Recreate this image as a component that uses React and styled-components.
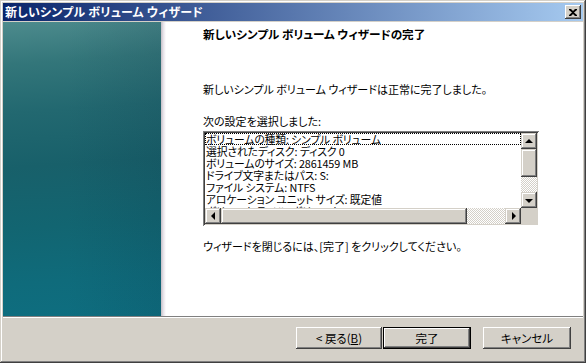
import React from "react";
import styled, { createGlobalStyle } from "styled-components";

const Global = createGlobalStyle`
  html, body { margin: 0; padding: 0; background: #d4d0c8; }
  body { width: 586px; height: 363px; overflow: hidden; }
  * { box-sizing: border-box; }
`;

const FONT = `"Noto Sans CJK JP", "Noto Sans", sans-serif`;

const Window = styled.div`
  width: 586px;
  height: 363px;
  display: flex;
  flex-direction: column;
  background: #d4d0c8;
  padding: 3px;
  box-shadow: inset -1px -1px #404040, inset 1px 1px #d4d0c8,
    inset -2px -2px #808080, inset 2px 2px #ffffff;
  font-family: ${FONT};
  font-size: 11px;
  font-feature-settings: "palt";
  color: #000;
`;

const TitleBar = styled.div`
  height: 18px;
  flex: none;
  display: flex;
  align-items: center;
  justify-content: space-between;
  padding: 0 2px 0 2px;
  background: linear-gradient(to right, #0a246a, #a6caf0);
  color: #fff;
  font-weight: bold;
  font-size: 12px;
  margin-bottom: 1px;
`;

const TitleText = styled.span`
  line-height: 18px;
  letter-spacing: 0.2px;
  white-space: nowrap;
`;

const CloseBox = styled.div`
  width: 16px;
  height: 14px;
  background: #d4d0c8;
  box-shadow: inset -1px -1px #404040, inset 1px 1px #ffffff,
    inset -2px -2px #808080, inset 2px 2px #d4d0c8;
  display: flex;
  align-items: center;
  justify-content: center;
`;

const Body = styled.div`
  height: 294px;
  flex: none;
  display: flex;
  background: #fff;
`;

const Banner = styled.div`
  width: 158px;
  flex: none;
  background:
    linear-gradient(to right, rgba(10, 40, 60, 0) 40%, rgba(10, 40, 60, 0.12) 100%),
    linear-gradient(176deg, #4d8b8d 0%, #33767a 14%, #226870 30%, #18606a 48%, #126571 68%, #0f6b7b 86%, #0e6e80 100%);
`;

const BannerShadow = styled.div`
  width: 5px;
  flex: none;
  background: linear-gradient(to right, #c4bfc6, #e8e4ea 50%, #ffffff);
`;

const Content = styled.div`
  flex: 1;
  display: flex;
  flex-direction: column;
  padding-left: 37px;
`;

const Heading = styled.div`
  font-weight: bold;
  font-size: 11.6px;
  line-height: 14px;
  margin-top: 5px;
  white-space: nowrap;
`;

const Para = styled.div`
  line-height: 14px;
  margin-top: ${(p) => p.$mt}px;
  white-space: nowrap;
`;

const ListBox = styled.div`
  width: 336px;
  height: 95px;
  margin-top: 3px;
  padding: 2px;
  background: #fff;
  box-shadow: inset 1px 1px #808080, inset -1px -1px #ffffff,
    inset 2px 2px #404040, inset -2px -2px #d4d0c8;
  display: grid;
  grid-template-columns: 316px 16px;
  grid-template-rows: 75px 16px;
`;

const Items = styled.div`
  overflow: hidden;
  display: flex;
  flex-direction: column;
`;

const Item = styled.div`
  height: 12px;
  flex: none;
  line-height: 12px;
  padding-left: 1px;
  font-size: 10.8px;
  letter-spacing: -0.1px;
  white-space: nowrap;
  outline: ${(p) => (p.$focus ? "1px dotted #000" : "none")};
  outline-offset: -1px;
`;

const VScroll = styled.div`
  display: flex;
  flex-direction: column;
`;

const HScroll = styled.div`
  display: flex;
`;

const Corner = styled.div`
  background: #d4d0c8;
`;

const ScrollBtn = styled.div`
  width: 16px;
  height: 16px;
  flex: none;
  background: #d4d0c8;
  box-shadow: inset -1px -1px #404040, inset 1px 1px #d4d0c8,
    inset -2px -2px #808080, inset 2px 2px #ffffff;
  display: flex;
  align-items: center;
  justify-content: center;
`;

const Thumb = styled.div`
  flex: none;
  width: ${(p) => (p.$h ? `${p.$len}px` : "16px")};
  height: ${(p) => (p.$h ? "16px" : `${p.$len}px`)};
  background: #d4d0c8;
  box-shadow: inset -1px -1px #404040, inset 1px 1px #d4d0c8,
    inset -2px -2px #808080, inset 2px 2px #ffffff;
`;

const Track = styled.div`
  flex: 1;
  background: repeating-conic-gradient(#d4d0c8 0 25%, #ffffff 0 50%) 0 0 / 2px 2px;
`;

const Tri = styled.div`
  width: 0;
  height: 0;
  ${(p) =>
    p.$dir === "up"
      ? "border-left: 4px solid transparent; border-right: 4px solid transparent; border-bottom: 4px solid #000; margin-top: -1px;"
      : p.$dir === "down"
      ? "border-left: 4px solid transparent; border-right: 4px solid transparent; border-top: 4px solid #000; margin-top: 1px;"
      : p.$dir === "left"
      ? "border-top: 4px solid transparent; border-bottom: 4px solid transparent; border-right: 4px solid #000; margin-left: -1px;"
      : "border-top: 4px solid transparent; border-bottom: 4px solid transparent; border-left: 4px solid #000; margin-left: 1px;"}
`;

const Separator = styled.div`
  height: 2px;
  flex: none;
  border-top: 1px solid #808080;
  border-bottom: 1px solid #ffffff;
`;

const Footer = styled.div`
  flex: 1;
  display: flex;
  justify-content: flex-end;
  align-items: flex-start;
  padding: 9px 12px 0 0;
`;

const Button = styled.button`
  width: ${(p) => p.$w}px;
  height: 22px;
  margin-left: ${(p) => p.$ml || 0}px;
  padding: 0;
  font-family: ${FONT};
  font-size: 11.5px;
  font-feature-settings: "palt";
  color: #000;
  background: #d4d0c8;
  border: ${(p) => (p.$default ? "1px solid #000" : "none")};
  box-shadow: inset -1px -1px #404040, inset 1px 1px #ffffff,
    inset -2px -2px #808080, inset 2px 2px #d4d0c8;
  display: flex;
  align-items: center;
  justify-content: center;
  line-height: 14px;
`;

const U = styled.span`
  text-decoration: underline;
`;

const items = [
  "ボリュームの種類: シンプル ボリューム",
  "選択されたディスク: ディスク 0",
  "ボリュームのサイズ: 2861459 MB",
  "ドライブ文字またはパス: S:",
  "ファイル システム: NTFS",
  "アロケーション ユニット サイズ: 既定値",
  "ボリューム ラベル: ボリューム",
];

export default function App() {
  return (
    <>
      <Global />
      <Window>
        <TitleBar>
          <TitleText>新しいシンプル ボリューム ウィザード</TitleText>
          <CloseBox>
            <svg width="8" height="7" viewBox="0 0 8 7">
              <path d="M0 0h2l2 2 2-2h2v1L5 3.5 8 6v1H6L4 5 2 7H0V6l3-2.5L0 1z" fill="#000" />
            </svg>
          </CloseBox>
        </TitleBar>
        <Body>
          <Banner />
          <BannerShadow />
          <Content>
            <Heading>新しいシンプル ボリューム ウィザードの完了</Heading>
            <Para $mt={41}>新しいシンプル ボリューム ウィザードは正常に完了しました。</Para>
            <Para $mt={18}>次の設定を選択しました:</Para>
            <ListBox>
              <Items>
                {items.map((t, i) => (
                  <Item key={i} $focus={i === 0}>
                    {t}
                  </Item>
                ))}
              </Items>
              <VScroll>
                <ScrollBtn>
                  <Tri $dir="up" />
                </ScrollBtn>
                <Thumb $len={28} />
                <Track />
                <ScrollBtn>
                  <Tri $dir="down" />
                </ScrollBtn>
              </VScroll>
              <HScroll>
                <ScrollBtn>
                  <Tri $dir="left" />
                </ScrollBtn>
                <Thumb $h $len={246} />
                <Track />
                <ScrollBtn>
                  <Tri $dir="right" />
                </ScrollBtn>
              </HScroll>
              <Corner />
            </ListBox>
            <Para $mt={13}>ウィザードを閉じるには、[完了] をクリックしてください。</Para>
          </Content>
        </Body>
        <Separator />
        <Footer>
          <Button $w={86}>
            &lt; 戻る(<U>B</U>)
          </Button>
          <Button $w={88} $ml={1} $default>
            完了
          </Button>
          <Button $w={88} $ml={12}>
            キャンセル
          </Button>
        </Footer>
      </Window>
    </>
  );
}
